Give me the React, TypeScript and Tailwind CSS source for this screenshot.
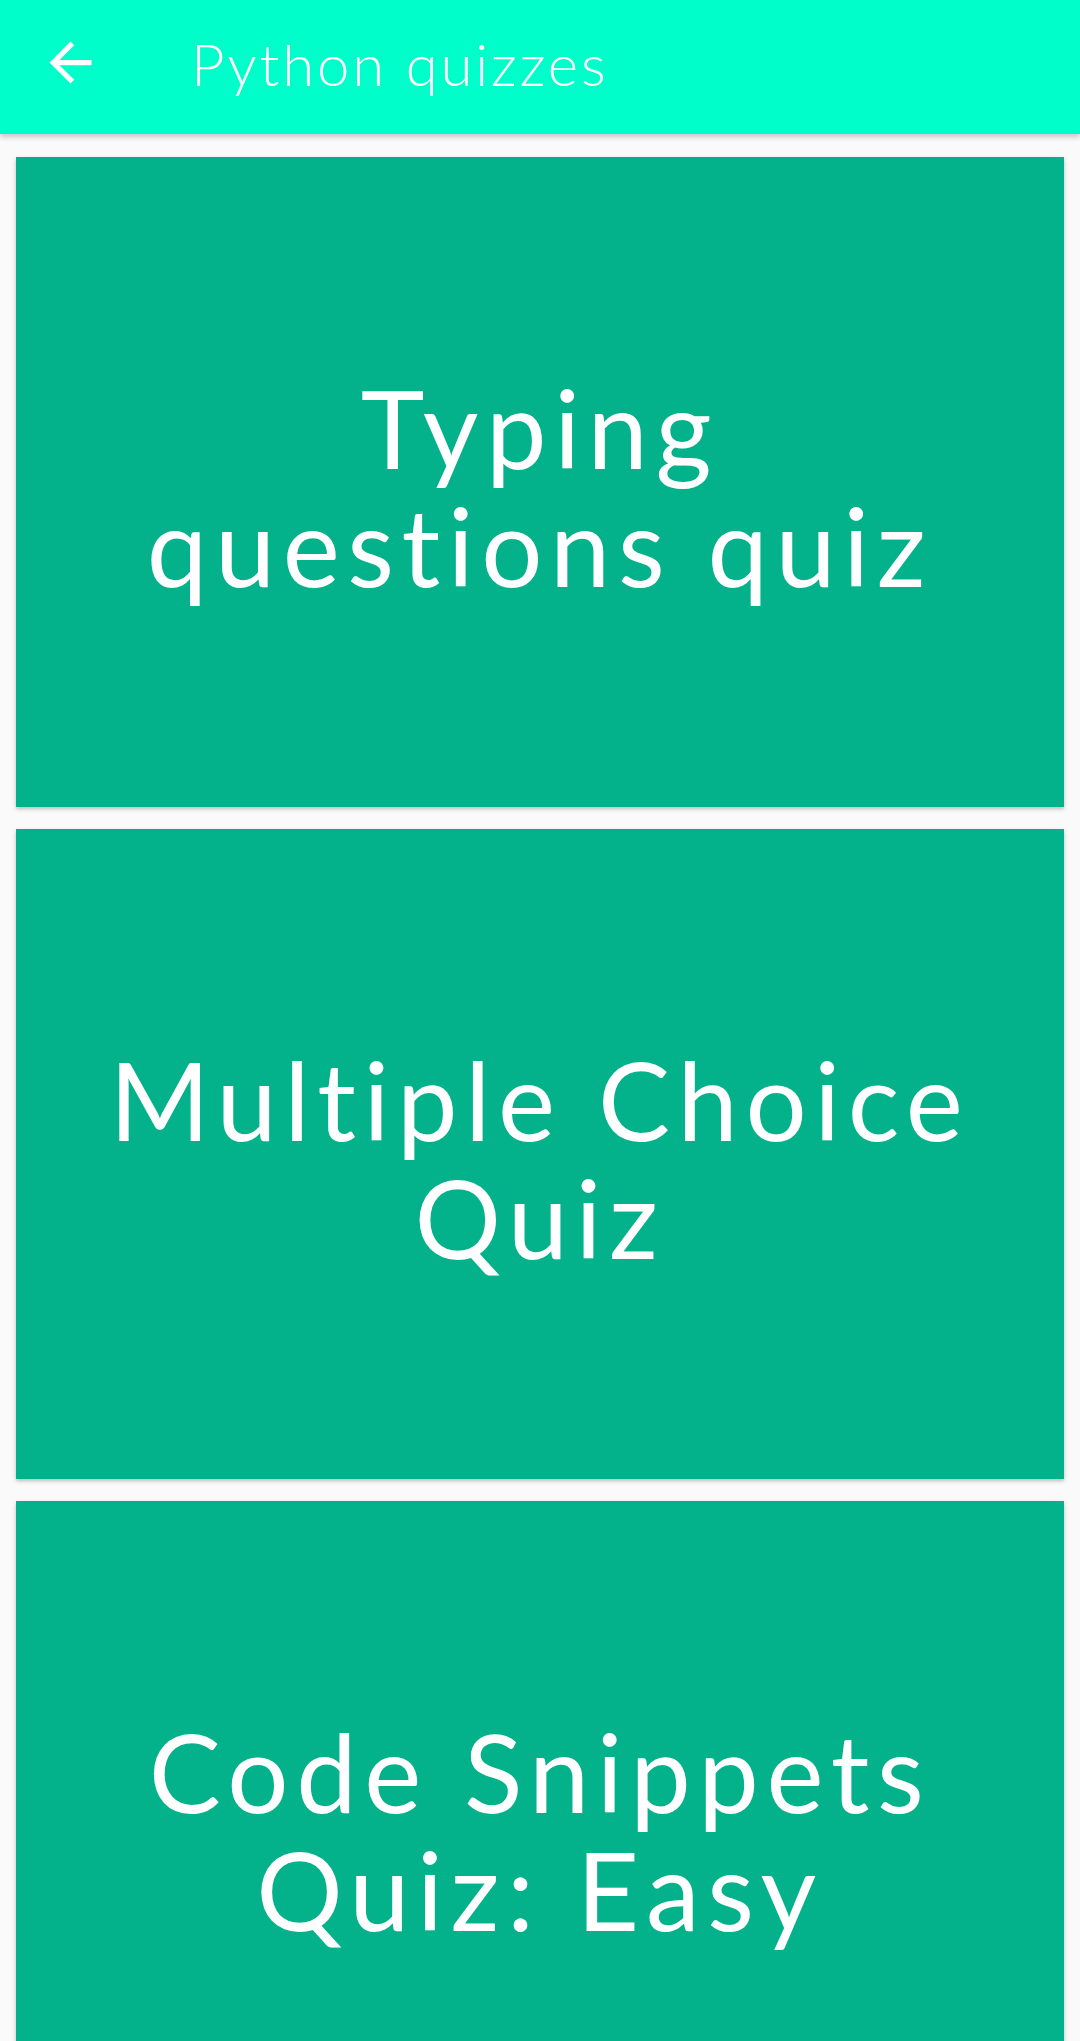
const quizzes = [
  ["Typing", "questions quiz"],
  ["Multiple Choice", "Quiz"],
  ["Code Snippets", "Quiz: Easy"],
]

const QuizCard = ({ lines }: { lines: string[] }) => (
  <div className="h-[650px] shrink-0 bg-[#03b28b] shadow-[0_2px_4px_rgba(0,0,0,0.25)] flex items-center justify-center pt-[7px]">
    <p className="text-center text-white text-[108px] leading-[118px] tracking-[0.07em] [font-variant-ligatures:none]">
      {lines.map((l) => (
        <span key={l} className="block whitespace-nowrap">
          {l}
        </span>
      ))}
    </p>
  </div>
)

export default function App() {
  return (
    <div className="w-[1080px] h-[2041px] overflow-hidden bg-[#fafafa] font-['Lato','Noto_Sans',sans-serif]">
      {/* Toolbar */}
      <header className="relative z-10 h-[134px] bg-[#00fecb] shadow-[0_3px_5px_rgba(0,0,0,0.2)] flex items-center pb-[10px]">
        <button className="ml-[39px] w-[63px] h-[63px] flex items-center justify-center text-white">
          <svg viewBox="0 0 24 24" className="w-[63px] h-[63px] fill-current">
            <path d="M20 11H7.83l5.59-5.59L12 4l-8 8 8 8 1.41-1.41L7.83 13H20v-2z" />
          </svg>
        </button>
        <h1 className="ml-[89px] mt-[3px] text-white text-[58px] font-light leading-none tracking-[0.05em] [font-variant-ligatures:none]">
          Python quizzes
        </h1>
      </header>

      <main className="flex flex-col gap-[22px] px-4 pt-[23px]">
        {quizzes.map((q) => (
          <QuizCard key={q[0]} lines={q} />
        ))}
      </main>
    </div>
  )
}
